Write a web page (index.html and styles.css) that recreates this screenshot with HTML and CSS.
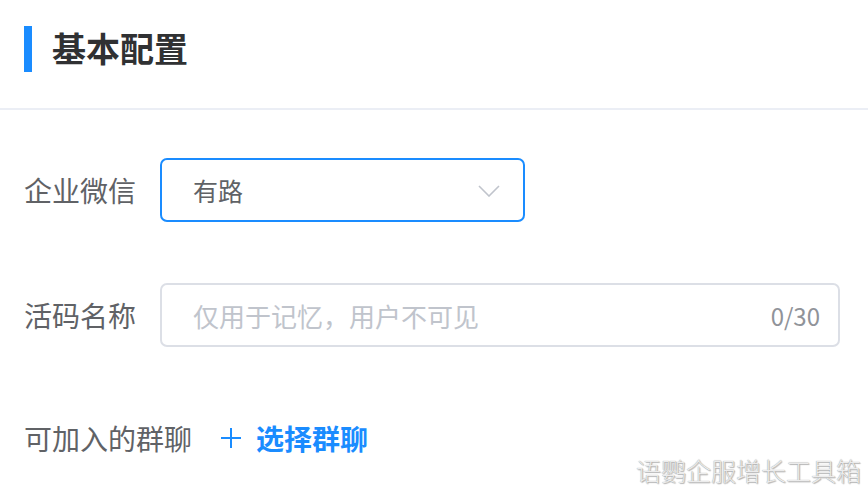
FILE: index.html
```html
<!DOCTYPE html>
<html lang="zh">
<head>
<meta charset="utf-8">
<link rel="stylesheet" href="styles.css">
</head>
<body>
<div class="page">
  <div class="header">
    <span class="bar"></span>
    <h1 class="title">基本配置</h1>
  </div>
  <div class="form">
    <div class="row">
      <div class="label">企业微信</div>
      <div class="select">
        <span class="value">有路</span>
        <svg class="chev" width="22" height="12" viewBox="0 0 22 12"><path d="M1 1 L11 11 L21 1" fill="none" stroke="#c0c4cc" stroke-width="1.6"/></svg>
      </div>
    </div>
    <div class="row">
      <div class="label">活码名称</div>
      <div class="input">
        <span class="placeholder">仅用于记忆，用户不可见</span>
        <span class="count">0/30</span>
      </div>
    </div>
    <div class="row short">
      <div class="label wide">可加入的群聊</div>
      <div class="add">
        <svg class="plus" width="22" height="22" viewBox="0 0 22 22"><path d="M11 1 V21 M1 11 H21" fill="none" stroke="#1a8cff" stroke-width="2"/></svg>
        <span class="add-text">选择群聊</span>
      </div>
    </div>
  </div>
  <div class="watermark">语鹦企服增长工具箱</div>
</div>
</body>
</html>
```

FILE: styles.css
```css
* { box-sizing: border-box; }
html, body { margin: 0; padding: 0; background: #fff; }
body {
  width: 868px;
  height: 494px;
  overflow: hidden;
  font-family: "PingFang SC", "Noto Sans CJK SC", "Noto Sans", sans-serif;
}
.page { position: relative; width: 868px; height: 494px; }
.header {
  height: 110px;
  border-bottom: 2px solid #ebeef5;
  display: flex;
  align-items: flex-start;
  padding: 26px 0 0 24px;
}
.bar {
  width: 8px;
  height: 46px;
  background: #1a8cff;
  flex-shrink: 0;
}
.title {
  margin: 0 0 0 20px;
  font-size: 34px;
  line-height: 44px;
  font-weight: 700;
  color: #303133;
}
.form {
  padding: 48px 0 0 24px;
  display: flex;
  flex-direction: column;
  gap: 61px;
}
.row {
  display: flex;
  align-items: center;
  height: 64px;
}
.row.short { height: 60px; }
.label {
  width: 136px;
  flex-shrink: 0;
  font-size: 28px;
  color: #606266;
  line-height: 40px;
}
.label.wide { width: auto; margin-right: 28px; }
.select {
  width: 365px;
  height: 64px;
  border: 2px solid #1a8cff;
  border-radius: 7px;
  display: flex;
  align-items: center;
  justify-content: space-between;
  padding: 0 23px 0 31px;
}
.value { font-size: 25px; color: #606266; }
.chev { margin-top: 2px; }
.input {
  width: 680px;
  height: 64px;
  border: 2px solid #dcdfe6;
  border-radius: 7px;
  display: flex;
  align-items: center;
  justify-content: space-between;
  padding: 0 18px 0 31px;
}
.placeholder { font-size: 26px; color: #c0c4cc; }
.count { font-size: 24px; color: #909399; }
.add {
  display: flex;
  align-items: center;
  gap: 14px;
}
.add-text {
  font-size: 28px;
  font-weight: 700;
  color: #1a8cff;
}
.watermark {
  position: absolute;
  right: 7px;
  top: 452px;
  font-size: 25px;
  font-weight: 300;
  color: #ececec;
  text-shadow: 0 0 1px #8a8a8a, 1px 1px 1px #b8b8b8;
}
```
